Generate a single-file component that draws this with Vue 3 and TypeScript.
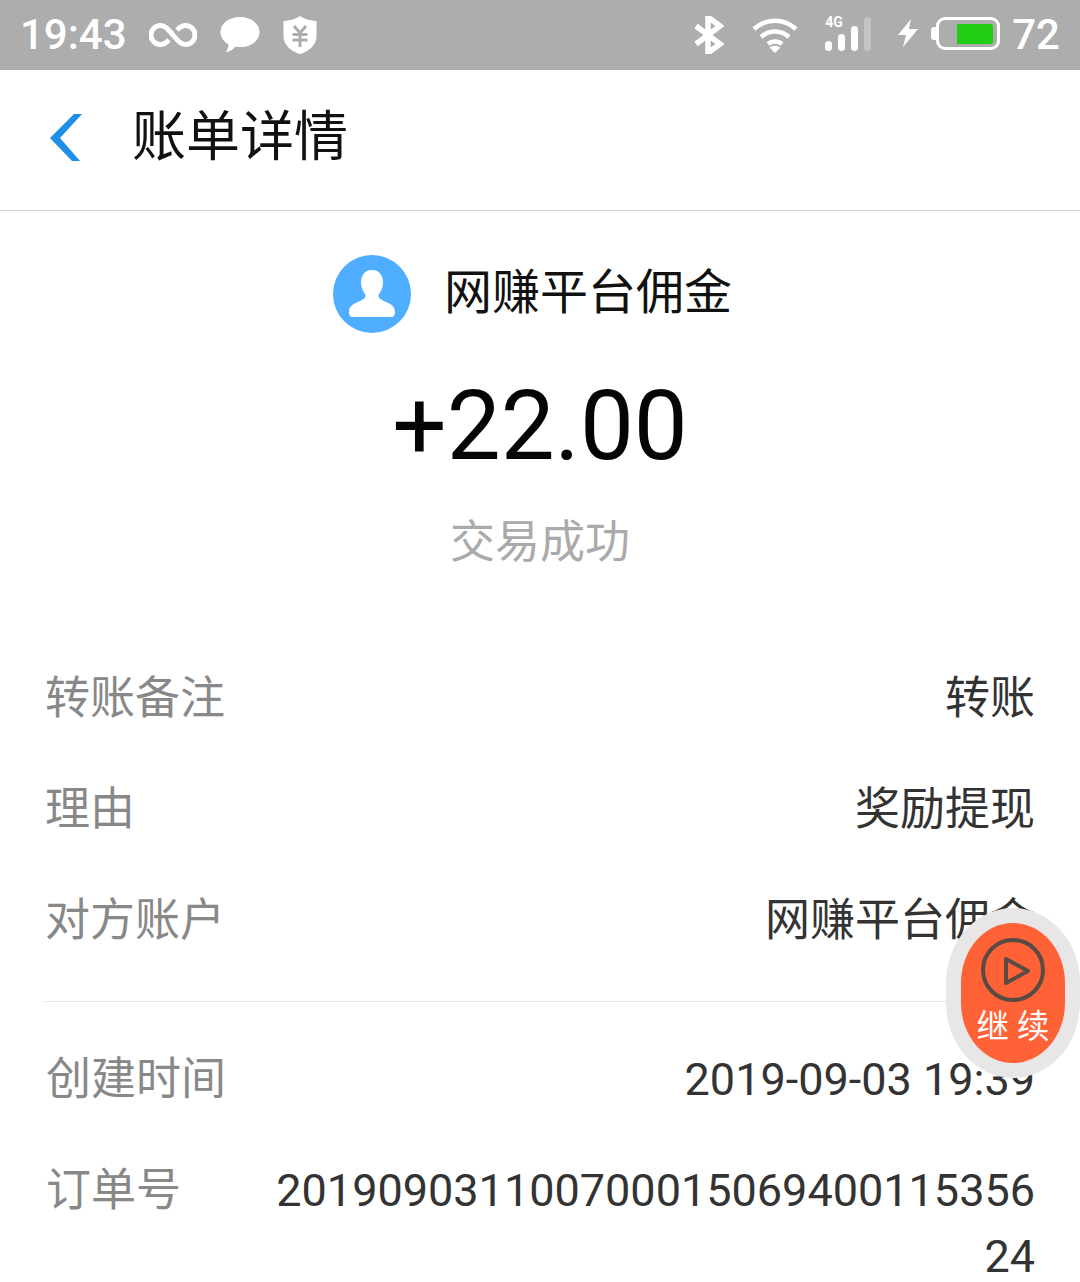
<template>
  <div class="page">
    <div class="status-bar">
      <div class="status-left">
        <span class="clock">19:43</span>
        <svg class="ic-loop" viewBox="0 0 48 26" width="48" height="26">
          <path d="M20 18C17 21 15 22.500 11.500 22.500A9.500 9.500 0 0 1 11.500 3.500C16 3.500 19 7 24 13C29 19 32 22.500 36.500 22.500A9.500 9.500 0 0 0 36.500 3.500C33 3.500 31 5 28 8" fill="none" stroke="#fff" stroke-width="5" />
        </svg>
        <svg class="ic-chat" viewBox="0 0 40 38" width="40" height="38">
          <path d="M20 1C31 1 39.500 7.500 39.500 16C39.500 25 31 31 20 31C18.500 31 17 31 15.500 30.700C13 33.500 9 36 6 36C7.500 33.500 8.500 31 8.500 28.300C3.500 25.500 0.500 21 0.500 16C0.500 7.500 9 1 20 1Z" fill="#fff" />
        </svg>
        <svg class="ic-shield" viewBox="0 0 34 40" width="34" height="40">
          <path d="M17 1C21 4 27 5.500 33.500 6V21C33.500 30 26 36.500 17 39C8 36.500 0.500 30 0.500 21V6C7 5.500 13 4 17 1Z" fill="#fff" />
          <path d="M11 11L17 18L23 11M9.500 19.500H24.500M9.500 25H24.500M17 18V32" fill="none" stroke="#adadad" stroke-width="3" />
        </svg>
      </div>
      <div class="status-right">
        <svg class="ic-bt" viewBox="0 0 30 38" width="30" height="38">
          <path d="M2 10L26 28L14 37V1L26 10L2 28" fill="none" stroke="#fff" stroke-width="5.500" />
        </svg>
        <svg class="ic-wifi" viewBox="0 0 46 38" width="46" height="38">
          <path d="M2 13C14 2 32 2 44 13M9 21C17 13.500 29 13.500 37 21M16 28C20 24.500 26 24.500 30 28" fill="none" stroke="#fff" stroke-width="4.500" />
          <path d="M17.500 31.500C21 29 25 29 28.500 31.500L23 37Z" fill="#fff" />
        </svg>
        <div class="signal">
          <span class="net">4G</span>
          <i v-for="b in bars" :key="b.h" class="bar" :class="{ off: b.off }" :style="{ height: b.h + 'px' }"></i>
        </div>
        <svg class="ic-bolt" viewBox="0 0 20 28" width="20" height="28">
          <path d="M13 0L0 16H8L5 28L20 10H11Z" fill="#fff" />
        </svg>
        <div class="battery">
          <span class="nub"></span>
          <span class="level"></span>
        </div>
        <span class="percent">72</span>
      </div>
    </div>

    <div class="top-nav">
      <svg class="ic-back" viewBox="0 0 34 48" width="34" height="48">
        <path d="M25 0H33L11 24L31 47H23L1 24Z" fill="#1e8fe6" />
      </svg>
      <h1 class="nav-title">账单详情</h1>
    </div>

    <div class="summary">
      <div class="payee">
        <svg class="avatar" viewBox="0 0 78 78" width="78" height="78">
          <circle cx="39" cy="39" r="39" fill="#4faeff" />
          <path d="M39 15C47 15 50 21 50 28C50 33 47.500 37 45.500 40C45 43 48 44.500 52 46.500C57 48.500 62 51 62 57C62 60 61 62 58 62H20C17 62 16 60 16 57C16 51 21 48.500 26 46.500C30 44.500 33 43 32.500 40C30.500 37 28 33 28 28C28 21 31 15 39 15Z" fill="#fff" />
        </svg>
        <span class="payee-name">网赚平台佣金</span>
      </div>
      <div class="amount">+22.00</div>
      <div class="state">交易成功</div>
    </div>

    <div class="info-group first">
      <div v-for="r in topRows" :key="r.label" class="row">
        <span class="label">{{ r.label }}</span>
        <span class="value">{{ r.value }}</span>
      </div>
    </div>

    <div class="info-group second">
      <div v-for="r in bottomRows" :key="r.label" class="row">
        <span class="label">{{ r.label }}</span>
        <span class="value">{{ r.value }}</span>
      </div>
    </div>

    <div class="float-btn">
      <div class="float-inner">
        <svg viewBox="0 0 64 64" width="64" height="64">
          <circle cx="32" cy="32" r="30" fill="none" stroke="#5a4a44" stroke-width="4" />
          <path d="M25 21L47 33L25 45Z" fill="none" stroke="#5a4a44" stroke-width="4" stroke-linejoin="round" />
        </svg>
        <span class="float-text">继 续</span>
      </div>
    </div>
  </div>
</template>

<script setup lang="ts">
const bars = [
  { h: 10, off: false },
  { h: 17, off: false },
  { h: 25, off: false },
  { h: 34, off: true },
];

const topRows = [
  { label: '转账备注', value: '转账' },
  { label: '理由', value: '奖励提现' },
  { label: '对方账户', value: '网赚平台佣金' },
];

const bottomRows = [
  { label: '创建时间', value: '2019-09-03 19:39' },
  { label: '订单号', value: '20190903110070001506940011535624' },
];
</script>

<style>
html,
body {
  margin: 0;
  overflow: hidden;
  background: #fff;
}
</style>

<style scoped>
.page {
  position: relative;
  width: 1080px;
  height: 1282px;
  overflow: hidden;
  background: #fff;
  font-family: Roboto, "Noto Sans CJK SC", sans-serif;
}

.status-bar {
  height: 70px;
  background: #adadad;
  color: #fff;
  display: flex;
  justify-content: space-between;
  align-items: center;
  padding: 0 20px;
  box-sizing: border-box;
}

.status-left,
.status-right {
  display: flex;
  align-items: center;
}

.clock {
  font-size: 42px;
  font-weight: 500;
  width: 129px;
  margin-bottom: 2px;
}

.ic-loop {
  margin-bottom: 1px;
}

.ic-chat {
  margin-left: 23px;
  margin-bottom: 1px;
}

.ic-shield {
  margin-left: 23px;
  margin-bottom: 1px;
}

.ic-bt {
  margin-bottom: 1px;
}

.ic-wifi {
  margin-left: 28px;
  margin-bottom: 0;
}

.signal {
  position: relative;
  display: flex;
  align-items: flex-end;
  gap: 6px;
  height: 34px;
  margin-left: 27px;
  margin-bottom: 3px;
}

.net {
  position: absolute;
  left: 0;
  top: -2px;
  font-size: 14px;
  font-weight: 700;
  line-height: 14px;
}

.bar {
  display: block;
  width: 7px;
  border-radius: 4px;
  background: #fff;
}

.bar.off {
  background: rgba(255, 255, 255, 0.3);
}

.ic-bolt {
  margin-left: 27px;
  margin-bottom: 4px;
}

.battery {
  position: relative;
  width: 64px;
  height: 33px;
  margin-left: 18px;
  margin-bottom: 3px;
  border: 3px solid #fff;
  border-radius: 9px;
  box-sizing: border-box;
}

.nub {
  position: absolute;
  left: -8px;
  top: 7px;
  width: 5px;
  height: 13px;
  background: #fff;
  border-radius: 3px 0 0 3px;
}

.level {
  position: absolute;
  left: 18px;
  top: 4px;
  width: 36px;
  height: 20px;
  background: #22cc15;
  border-radius: 0 2px 2px 0;
}

.percent {
  font-size: 42px;
  font-weight: 500;
  margin-left: 12px;
  margin-bottom: 2px;
}

.top-nav {
  height: 140px;
  border-bottom: 1px solid #cfcfcf;
  display: flex;
  align-items: center;
  padding-left: 49px;
}

.ic-back {
  margin-bottom: 5px;
}

.nav-title {
  margin: 0 0 4px 49px;
  font-size: 54px;
  font-weight: 400;
  color: #111;
  line-height: 1;
}

.summary {
  display: flex;
  flex-direction: column;
  align-items: center;
  padding-top: 44px;
}

.payee {
  display: flex;
  align-items: center;
  gap: 33px;
  height: 78px;
  padding-right: 15px;
}

.payee-name {
  font-size: 48px;
  color: #111;
  line-height: 1;
  margin-bottom: 2px;
}

.amount {
  margin-top: 38px;
  font-size: 96px;
  line-height: 110px;
  color: #050505;
}

.state {
  margin-top: 32px;
  font-size: 45px;
  line-height: 60px;
  color: #aaa;
}

.info-group {
  padding: 0 45px 0 46px;
}

.info-group.first {
  margin-top: 70px;
  padding-bottom: 25px;
  border-bottom: 1px solid #e4e4e4;
  margin-left: 45px;
  padding-left: 0;
}

.info-group.second {
  padding-top: 22px;
}

.row {
  display: flex;
  justify-content: space-between;
  gap: 90px;
  padding: 22.500px 0;
  font-size: 45px;
  line-height: 66px;
}

.row:first-child {
  margin-top: 0;
}

.label {
  flex-shrink: 0;
  color: #888;
}

.value {
  color: #333;
  text-align: right;
  word-break: break-all;
}

.float-btn {
  position: absolute;
  left: 946px;
  top: 908px;
  width: 134px;
  height: 170px;
  padding: 15px;
  box-sizing: border-box;
  border-radius: 67px / 75px;
  background: #e8e6e7;
}

.float-inner {
  width: 104px;
  height: 140px;
  border-radius: 52px / 60px;
  background: #ff6236;
  display: flex;
  flex-direction: column;
  align-items: center;
  padding-top: 15px;
  box-sizing: border-box;
}

.float-text {
  margin-top: 5px;
  font-size: 32.500px;
  line-height: 40px;
  color: #fff;
  white-space: nowrap;
}
</style>
